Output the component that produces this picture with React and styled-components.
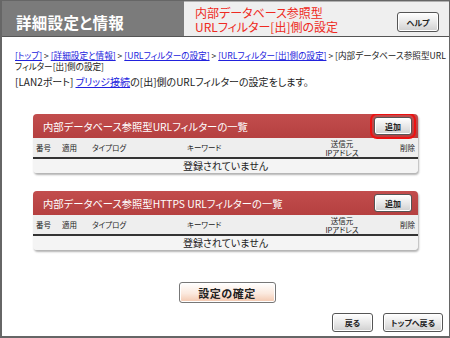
import React from "react";
import styled, { createGlobalStyle } from "styled-components";

const GlobalStyle = createGlobalStyle`
  html, body {
    margin: 0;
    padding: 0;
    background: #fff;
  }
  body {
    font-family: "Noto Sans CJK JP", "DejaVu Sans", sans-serif;
    font-feature-settings: "palt";
    color: #222;
  }
`;

const Frame = styled.div`
  width: 450px;
  height: 338px;
  box-sizing: border-box;
  border: 1px solid #666;
  border-left-width: 2px;
  border-bottom-width: 2px;
  background: #fff;
  display: flex;
  flex-direction: column;
  overflow: hidden;
`;

const Header = styled.div`
  height: 35px;
  display: flex;
  border-bottom: 1px solid #555;
  flex-shrink: 0;
`;

const HeaderTitle = styled.div`
  width: 182px;
  background: #7b7b7b;
  color: #fff;
  font-size: 15.5px;
  font-weight: bold;
  padding: 6px 0 0 14px;
  box-sizing: border-box;
  display: flex;
  align-items: center;
  letter-spacing: 0.3px;
`;

const HeaderSub = styled.div`
  flex: 1;
  background: #efefef;
  border-top: 1px solid #b0b0b0;
  display: flex;
  align-items: center;
  padding: 0 10px 0 11px;
`;

const SubTitle = styled.div`
  color: #ee2a22;
  font-size: 12px;
  line-height: 13.5px;
  padding-top: 1px;
`;

const Button = styled.button`
  font-family: inherit;
  font-feature-settings: "palt";
  font-size: ${p => p.$size || 8}px;
  font-weight: bold;
  color: #222;
  height: ${p => p.$h || 18}px;
  width: ${p => p.$w || 40}px;
  padding: 0;
  border: 1px solid #555;
  border-radius: 3px;
  background: linear-gradient(#ffffff, #e4e4e4 60%, #cfcfcf);
  box-shadow: inset 0 0 0 1px #fff;
  cursor: pointer;
  outline: ${p => (p.$focus ? "2px solid #ee1111" : "none")};
  outline-offset: 2px;
`;

const HelpButton = styled(Button)`
  margin-left: auto;
  margin-top: 6px;
`;

const Content = styled.div`
  flex: 1;
  display: flex;
  flex-direction: column;
  padding: 13px 5px 0 13px;
`;

const Breadcrumb = styled.div`
  font-size: 8.6px;
  line-height: 11px;
  color: #222;
  white-space: nowrap;
`;

const Link = styled.a`
  color: #2222dd;
  text-decoration: underline;
`;

const Desc = styled.div`
  font-size: 10px;
  line-height: 14px;
  margin-top: 3px;
`;

const Panel = styled.div`
  width: 385px;
  margin: ${p => p.$top}px 0 0 18px;
  border-radius: 4px;
  overflow: hidden;
  background: #f3f3f3;
  box-shadow: 1px 2px 2px rgba(0, 0, 0, 0.3);
`;

const PanelHead = styled.div`
  height: 24px;
  background: linear-gradient(#c24d4d, #b54040);
  display: flex;
  align-items: center;
  padding: 0 6px 0 10px;
  color: #fff;
  font-size: 10.3px;
`;

const AddButton = styled(Button)`
  margin-left: auto;
  height: 18px;
  width: 38px;
`;

const ColRow = styled.div`
  display: grid;
  grid-template-columns: 26px 30px 95px 131px 48px 1fr;
  align-items: center;
  height: 19px;
  padding: 0 3px;
  background: #eeeeee;
  border-bottom: 2px solid #333;
  font-size: 7.5px;
  line-height: 9px;
`;

const Col = styled.div`
  text-align: ${p => p.$align || "left"};
`;

const EmptyRow = styled.div`
  height: 14px;
  line-height: 14px;
  text-align: center;
  font-size: 10px;
  background: #f4f4f4;
`;

const ConfirmRow = styled.div`
  display: flex;
  justify-content: center;
  margin-top: 32px;
  padding-right: 5px;
`;

const ConfirmButton = styled(Button)`
  background: linear-gradient(#ffffff, #fbe9de 55%, #f3c7ae);
  border-color: #777;
  border-radius: 3px;
  letter-spacing: 0.5px;
`;

const Footer = styled.div`
  display: flex;
  justify-content: flex-end;
  gap: 10px;
  margin-top: 10px;
  padding-right: 1px;
`;

const columns = ["番号", "適用", "タイプログ", "キーワード"];

const FilterPanel = ({ title, top, focus }) => (
  <Panel $top={top}>
    <PanelHead>
      {title}
      <AddButton $focus={focus}>追加</AddButton>
    </PanelHead>
    <ColRow>
      {columns.map(c => (
        <Col key={c}>{c}</Col>
      ))}
      <Col $align="center">
        送信元
        <br />
        IPアドレス
      </Col>
      <Col $align="right">削除</Col>
    </ColRow>
    <EmptyRow>登録されていません</EmptyRow>
  </Panel>
);

export default function App() {
  return (
    <>
      <GlobalStyle />
      <Frame>
        <Header>
          <HeaderTitle>詳細設定と情報</HeaderTitle>
          <HeaderSub>
            <SubTitle>
              内部データベース参照型
              <br />
              URLフィルター[出]側の設定
            </SubTitle>
            <HelpButton $w={42} $h={20}>ヘルプ</HelpButton>
          </HeaderSub>
        </Header>
        <Content>
          <Breadcrumb>
            <Link href="#">[トップ]</Link> &gt; <Link href="#">[詳細設定と情報]</Link> &gt;{" "}
            <Link href="#">[URLフィルターの設定]</Link> &gt;{" "}
            <Link href="#">[URLフィルター[出]側の設定]</Link> &gt; [内部データベース参照型URL
            <br />
            フィルター[出]側の設定]
          </Breadcrumb>
          <Desc>
            [LAN2ポート] <Link href="#">ブリッジ接続</Link>の[出]側のURLフィルターの設定をします。
          </Desc>
          <FilterPanel title="内部データベース参照型URLフィルターの一覧" top={25} focus />
          <FilterPanel title="内部データベース参照型HTTPS URLフィルターの一覧" top={18} />
          <ConfirmRow>
            <ConfirmButton $w={97} $h={21} $size={11}>
              設定の確定
            </ConfirmButton>
          </ConfirmRow>
          <Footer>
            <Button $w={41} $h={19} $size={8}>
              戻る
            </Button>
            <Button $w={60} $h={19} $size={8}>
              トップへ戻る
            </Button>
          </Footer>
        </Content>
      </Frame>
    </>
  );
}
